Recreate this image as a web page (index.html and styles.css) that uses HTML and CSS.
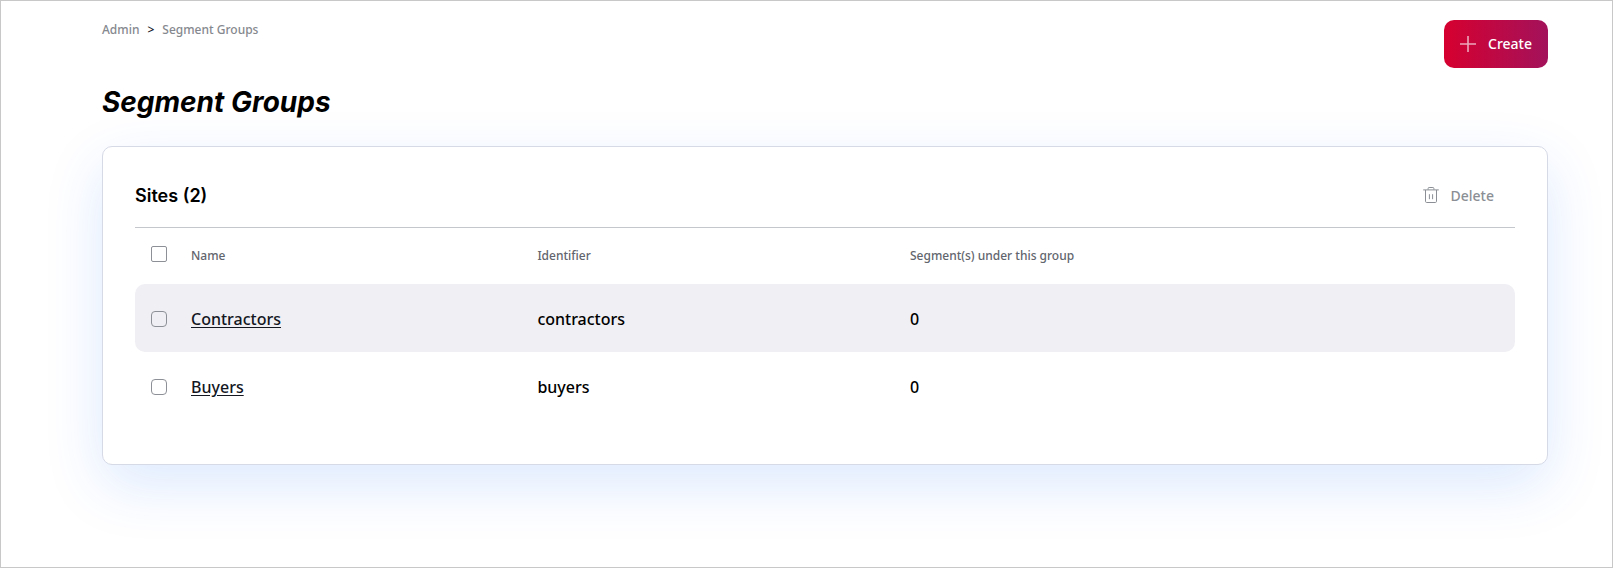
FILE: index.html
```html
<!DOCTYPE html>
<html lang="en">
<head>
<meta charset="utf-8">
<meta name="viewport" content="width=device-width, initial-scale=1">
<title>Segment Groups</title>
<link rel="stylesheet" href="styles.css">
</head>
<body>
<main class="page">
  <header class="page-header">
    <div class="page-intro">
      <nav class="breadcrumb" aria-label="Breadcrumb">
        <a href="#">Admin</a>
        <span class="separator">&gt;</span>
        <a href="#">Segment Groups</a>
      </nav>
      <h1 class="page-title">Segment Groups</h1>
    </div>
    <button class="create-button" type="button">
      <svg class="icon" viewBox="0 0 16 16" aria-hidden="true"><path d="M8 0v16M0 8h16" stroke-width="1.6"/></svg>
      Create
    </button>
  </header>
  <section class="card">
    <div class="card-header">
      <h2 class="card-title">Sites (2)</h2>
      <button class="delete-button" type="button" disabled>
        <svg class="icon" viewBox="0 0 16 16" aria-hidden="true"><path d="M.2 2.9h15.6M5.1 2.7V1.5q0-1 1-1h3.8q1 0 1 1v1.2M2.5 3v11.3q0 1.2 1.2 1.2h8.6q1.2 0 1.2-1.2V3M6.4 7.2v5M9.6 7.2v5"/></svg>
        Delete
      </button>
    </div>
    <table class="groups">
      <thead>
        <tr>
          <th class="col-check"><input class="checkbox" type="checkbox" aria-label="Select all"></th>
          <th class="col-name">Name</th>
          <th class="col-identifier">Identifier</th>
          <th>Segment(s) under this group</th>
        </tr>
      </thead>
      <tbody>
        <tr>
          <td class="col-check"><input class="checkbox" type="checkbox" aria-label="Select Contractors"></td>
          <td><a class="group-link" href="#">Contractors</a></td>
          <td>contractors</td>
          <td>0</td>
        </tr>
        <tr>
          <td class="col-check"><input class="checkbox" type="checkbox" aria-label="Select Buyers"></td>
          <td><a class="group-link" href="#">Buyers</a></td>
          <td>buyers</td>
          <td>0</td>
        </tr>
      </tbody>
    </table>
  </section>
</main>
</body>
</html>
```

FILE: styles.css
```css
* {
  box-sizing: border-box;
}

body {
  margin: 0;
  background: #fff;
  color: #000;
  font-family: "Noto Sans", sans-serif;
  font-size: 16px;
  font-weight: 500;
  line-height: 24px;
}

button {
  font-family: inherit;
}

.page {
  min-height: 100vh;
  padding: 19px 64px 48px 101px;
  border: 1px solid #c8c8c8;
}

.page-header {
  display: flex;
  align-items: flex-start;
  justify-content: space-between;
  margin-bottom: 28px;
}

.breadcrumb {
  display: flex;
  gap: 8px;
  padding-top: 2px;
  font-size: 12px;
  line-height: 16px;
}

.breadcrumb a {
  color: #85888e;
  text-decoration: none;
}

.separator {
  color: #14171f;
}

.page-title {
  margin: 48px 0 0;
  font-family: Inter, sans-serif;
  font-size: 28px;
  font-style: italic;
  font-weight: 700;
  line-height: 32px;
}

.icon {
  width: 16px;
  height: 16px;
  fill: none;
  stroke: currentColor;
}

.create-button {
  display: flex;
  align-items: center;
  gap: 12px;
  height: 48px;
  padding: 0 16px 2px;
  border: 0;
  border-radius: 10px;
  background: linear-gradient(90deg, #d6002f, #a3125b);
  color: #fff;
  font-size: 14px;
  font-weight: 500;
}

.create-button .icon {
  margin-top: 2px;
  opacity: 0.65;
}

.card {
  padding: 24px 32px 44px;
  border: 1px solid #d6dae6;
  border-radius: 10px;
  background: #fff;
  box-shadow: 0 20px 60px rgba(0, 98, 245, 0.14);
}

.card-header {
  display: flex;
  align-items: center;
  justify-content: space-between;
  height: 57px;
  padding-bottom: 8px;
  border-bottom: 1px solid #c4c7cc;
}

.card-title {
  margin: 2px 0 0;
  font-family: Inter, sans-serif;
  font-size: 18px;
  font-weight: 600;
  line-height: 24px;
}

.delete-button {
  display: flex;
  align-items: center;
  gap: 12px;
  padding: 0 21px;
  border: 0;
  background: none;
  color: #8b8f95;
  font-size: 14px;
  font-weight: 500;
}

.groups {
  width: 100%;
  border-collapse: collapse;
  table-layout: fixed;
}

.groups th,
.groups td {
  padding: 0;
  text-align: left;
  vertical-align: middle;
}

.groups th {
  height: 56px;
  color: #62656d;
  font-size: 12px;
  font-weight: 500;
}

.groups td {
  height: 68px;
  padding-top: 2px;
}

.groups .col-check {
  width: 56px;
  padding-left: 16px;
}

.col-name {
  width: 25.1%;
}

.col-identifier {
  width: 27%;
}

.groups tbody tr:nth-child(odd) td {
  background: #f0eff4;
}

.groups td:first-child {
  border-radius: 10px 0 0 10px;
}

.groups td:last-child {
  border-radius: 0 10px 10px 0;
}

.checkbox {
  display: block;
  width: 16px;
  height: 16px;
  margin: 0;
  border: 1px solid #8d9097;
  border-radius: 4px;
  appearance: none;
  background: #fff;
}

.groups tbody .checkbox {
  background: transparent;
}

.groups thead .checkbox {
  margin-bottom: 4px;
  border-radius: 2px;
}

.group-link {
  color: #14171f;
  text-decoration: underline;
  text-underline-offset: 2px;
}
```
